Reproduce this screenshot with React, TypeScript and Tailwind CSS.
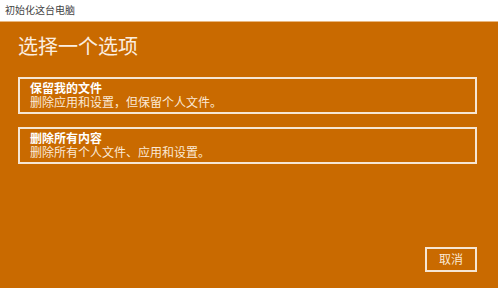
export default function App() {
  const options = [
    { title: "保留我的文件", desc: "删除应用和设置，但保留个人文件。" },
    { title: "删除所有内容", desc: "删除所有个人文件、应用和设置。" },
  ];
  return (
    <div
      className="w-[498px] h-[288px] flex flex-col bg-[#c96a00] overflow-hidden"
      style={{ fontFamily: '"Liberation Sans", "Noto Sans CJK SC", sans-serif' }}
    >
      <div className="h-[22px] bg-white flex items-center px-[5px] text-[10px] text-[#444] border-b border-[#e9b77f]">
        初始化这台电脑
      </div>
      <div className="flex-1 flex flex-col pl-[18px] pr-[21px]">
        <h1 className="mt-[11px] text-[20px] leading-[28px] text-[#fbeee0]">选择一个选项</h1>
        <div className="mt-[16px] flex flex-col gap-[13px]">
          {options.map((o) => (
            <div
              key={o.title}
              className="h-[37px] border-2 border-[#f6e6d4] px-[10px] flex flex-col justify-center"
            >
              <div className="text-[12px] leading-[14px] font-bold text-white">{o.title}</div>
              <div className="text-[12px] leading-[14px] text-[#fbe9d6]">{o.desc}</div>
            </div>
          ))}
        </div>
        <div className="flex-1" />
        <div className="flex justify-end mb-[16px]">
          <button className="w-[52px] h-[25px] border-2 border-[#f6e6d4] text-[12px] text-[#fbe9d6] flex items-center justify-center">
            取消
          </button>
        </div>
      </div>
    </div>
  );
}
